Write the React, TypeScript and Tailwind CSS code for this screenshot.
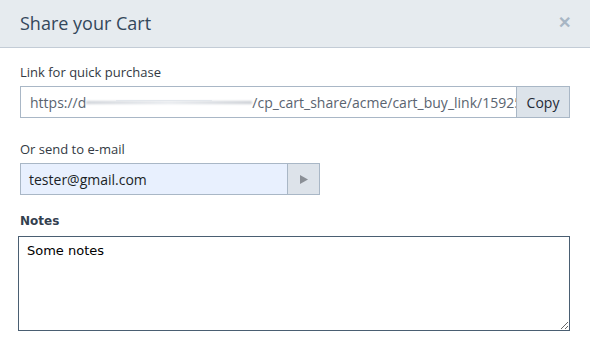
import React from "react";

export default function App() {
  return (
    <div className="w-[590px] h-[343px] bg-white overflow-hidden" style={{ fontFamily: '"Open Sans", sans-serif' }}>
      <div className="h-[48px] bg-[#e6ebef] border-b border-[#c3ccd6] flex items-center justify-between pl-[20px] pr-[19px]">
        <div className="text-[18px] text-[#33475b] leading-none pb-[2px]">Share your Cart</div>
        <div className="text-[#a8b6c4] text-[16px] font-bold leading-none pb-[3px]">✕</div>
      </div>
      <div className="px-[20px] pt-[15px]">
        <div className="text-[13px] text-[#333a44] leading-[18px]">Link for quick purchase</div>
        <div className="mt-[5px] flex w-[550px] h-[32px]">
          <div className="flex-1 min-w-0 border border-[#a9b7c6] border-r-0 bg-white flex items-center pl-[9px] overflow-hidden whitespace-nowrap text-[14px] text-[#5a6470]">
            <span>https://d</span>
            <span className="inline-block w-[166px] h-[10px] relative shrink-0">
              <span className="absolute left-0 right-0 top-[4px] h-[3px] bg-gradient-to-r from-[#cdd1d7] via-[#e6e9ed] to-[#c9cdd3] blur-[0.8px]" />
              <span className="absolute left-[30px] right-[40px] top-[3px] h-[1px] bg-[#e3e7ec] blur-[0.5px]" />
            </span>
            <span>/cp_cart_share/acme/cart_buy_link/159253</span>
          </div>
          <div className="w-[54px] shrink-0 bg-[#dce3ea] border border-[#a9b7c6] flex items-center justify-center text-[14px] text-[#1f2a36]">Copy</div>
        </div>
        <div className="mt-[22px] text-[13px] text-[#333a44] leading-[18px]">Or send to e-mail</div>
        <div className="mt-[5px] flex w-[300px] h-[32px]">
          <div className="flex-1 border border-[#a9b7c6] border-r-0 bg-[#e8f0fe] flex items-center pl-[8px] text-[14px] text-[#1a1f26]">tester@gmail.com</div>
          <div className="w-[33px] bg-[#dde3ea] border border-[#a9b7c6] flex items-center justify-center">
            <svg width="8" height="9" viewBox="0 0 8 9"><path d="M0 0 L8 4.5 L0 9 Z" fill="#8a8f96" /></svg>
          </div>
        </div>
        <div className="mt-[18px] text-[12px] font-bold text-[#33404f] leading-[16px]" style={{ fontFamily: '"DejaVu Sans", sans-serif' }}>Notes</div>
        <textarea
          defaultValue="Some notes"
          className="mt-[7px] -ml-[2px] block w-[552px] h-[95px] border border-[#4a5e72] px-[8px] py-[4px] text-[13px] text-black outline-none"
          style={{ fontFamily: '"DejaVu Sans", sans-serif' }}
        />
      </div>
    </div>
  );
}
